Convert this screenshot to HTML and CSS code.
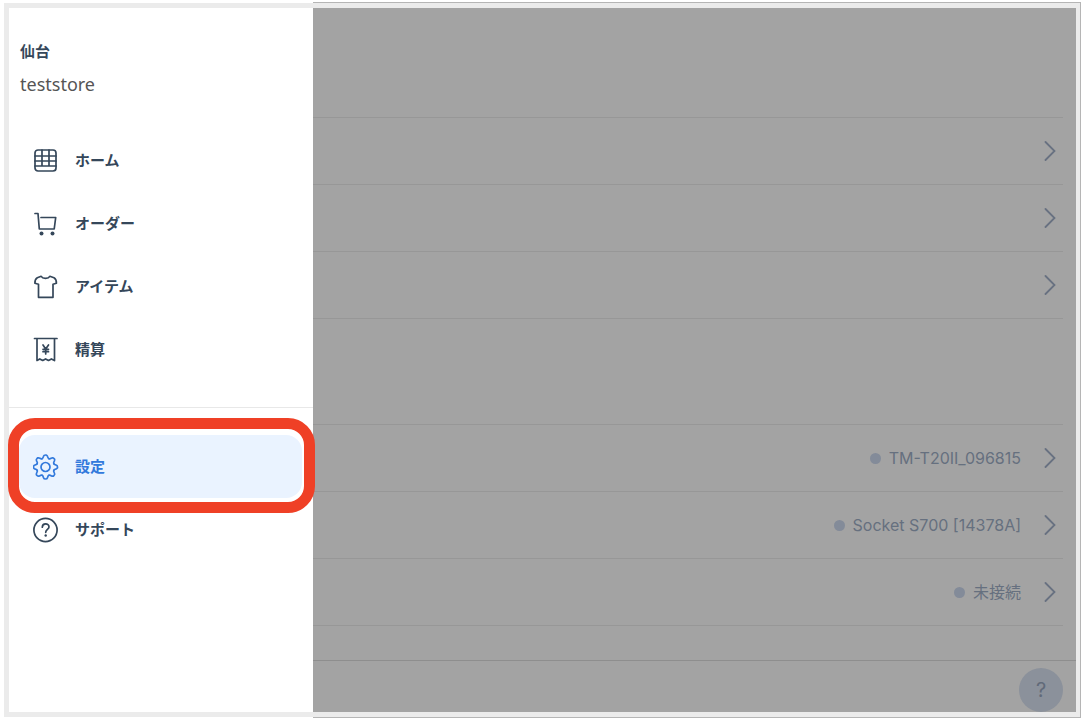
FILE: index.html
```html
<!DOCTYPE html>
<html lang="ja">
<head>
    <meta charset="UTF-8">
    <meta name="viewport" content="width=device-width, initial-scale=1.0">
    <title>設定</title>
    <link rel="stylesheet" href="styles.css">
</head>
<body>
    <div class="app">
        <aside class="sidebar">
            <div class="store">
                <h1 class="store-name">仙台</h1>
                <p class="store-id">teststore</p>
            </div>

            <nav class="menu">
                <a class="menu-item" href="#home">
                    <svg class="icon" viewBox="0 0 26 26">
                        <rect x="2" y="2" width="21" height="21" rx="3"/>
                        <path d="M2 8h21M2 13h21M2 18h21M9 2v16M16 2v16"/>
                    </svg>
                    ホーム
                </a>
                <a class="menu-item" href="#orders">
                    <svg class="icon" viewBox="0 0 26 26">
                        <path d="M2 2.500h3l1.300 15.500h14.900l1.500-11.500H8"/>
                        <circle class="dot-fill" cx="8.500" cy="22.500" r="2"/>
                        <circle class="dot-fill" cx="19.500" cy="22.500" r="2"/>
                    </svg>
                    オーダー
                </a>
                <a class="menu-item" href="#items">
                    <svg class="icon" viewBox="0 0 26 26">
                        <path d="M8.200 2.300c1.400 2.700 7.200 2.700 8.600 0l4.200 1.500c1.700 1 2.500 2.800 2.400 5.400l-3.400 1V23.300H5.500V10.200l-3.600-1c-.1-2.600.7-4.400 2.400-5.400z"/>
                    </svg>
                    アイテム
                </a>
                <a class="menu-item" href="#settlement">
                    <svg class="icon" viewBox="0 0 26 26">
                        <path d="M1.500 1.500h22.500M4 1.500v22l2.800-1.600L9.700 23.500l2.900-1.600 2.900 1.600 2.900-1.600L21.500 23.500V1.500"/>
                        <path d="M10 8l2.700 4L15.500 8M12.700 12V17M10 12.300h5.500M10 14.700h5.500"/>
                    </svg>
                    精算
                </a>
            </nav>

            <nav class="menu menu-sub">
                <a class="menu-item active" href="#settings">
                    <svg class="icon" viewBox="-12.500 -13 26 26">
                        <path id="tooth" d="M-3.400-8.300C-2.300-8.700-2.300-9.800-2-10.700Q-1.600-12 0-12T0-12Q1.600-12 2-10.700C2.300-9.800 2.300-8.700 3.400-8.300"/>
                        <use href="#tooth" transform="rotate(45)"/>
                        <use href="#tooth" transform="rotate(90)"/>
                        <use href="#tooth" transform="rotate(135)"/>
                        <use href="#tooth" transform="rotate(180)"/>
                        <use href="#tooth" transform="rotate(225)"/>
                        <use href="#tooth" transform="rotate(270)"/>
                        <use href="#tooth" transform="rotate(315)"/>
                        <circle r="4.500"/>
                    </svg>
                    設定
                </a>
                <a class="menu-item" href="#support">
                    <svg class="icon" viewBox="0 0 26 26">
                        <circle cx="12.500" cy="13" r="11.600"/>
                        <path d="M9.300 10.200c0-4.400 6.700-4.400 6.700-.3 0 2.500-3.300 2.500-3.300 5.400"/>
                        <circle class="dot-fill" cx="12.700" cy="18.500" r="1.200"/>
                    </svg>
                    サポート
                </a>
            </nav>
        </aside>

        <main class="main">
            <ul class="list">
                <li><a class="row" href="#general" aria-label="一般"><svg class="chevron" viewBox="0 0 12 20"><path d="M1.500 1l9 9-9 9"/></svg></a></li>
                <li><a class="row" href="#payment" aria-label="決済"><svg class="chevron" viewBox="0 0 12 20"><path d="M1.500 1l9 9-9 9"/></svg></a></li>
                <li><a class="row" href="#receipt" aria-label="レシート"><svg class="chevron" viewBox="0 0 12 20"><path d="M1.500 1l9 9-9 9"/></svg></a></li>
            </ul>
            <ul class="list">
                <li><a class="row" href="#printer"><span class="status">TM-T20II_096815</span><svg class="chevron" viewBox="0 0 12 20"><path d="M1.500 1l9 9-9 9"/></svg></a></li>
                <li><a class="row" href="#scanner"><span class="status">Socket S700 [14378A]</span><svg class="chevron" viewBox="0 0 12 20"><path d="M1.500 1l9 9-9 9"/></svg></a></li>
                <li><a class="row" href="#terminal"><span class="status">未接続</span><svg class="chevron" viewBox="0 0 12 20"><path d="M1.500 1l9 9-9 9"/></svg></a></li>
            </ul>
            <footer class="footer">
                <button class="help" type="button">?</button>
            </footer>
        </main>
    </div>
</body>
</html>
```
FILE: styles.css
```css
* {
    margin: 0;
    padding: 0;
    box-sizing: border-box;
}
body {
    display: flex;
    min-height: 100vh;
    padding: 3px 11px 11px 4px;
    background-color: #fff;
    font-family: Inter, "Noto Sans CJK JP", sans-serif;
    font-size: 15px;
    line-height: 20px;
    color: #35475a;
}
a {
    color: inherit;
    text-decoration: none;
}
.app {
    flex: 1;
    display: flex;
    border: 5px solid #ebebeb;
}

/* Sidebar */
.sidebar {
    flex: 0 0 304px;
    background-color: #fff;
}
.store {
    height: 121px;
    padding: 34px 11px 0;
}
.store-name {
    font-size: 15px;
    font-weight: 700;
}
.store-id {
    margin-top: 12px;
    font-family: "Noto Sans", sans-serif;
    font-size: 18px;
    color: #555;
}
.menu {
    padding: 0 11px 26px 10px;
}
.menu-sub {
    padding-top: 27px;
    border-top: 1px solid #e8e8e8;
}
.menu-item {
    display: flex;
    align-items: center;
    gap: 16px;
    height: 63px;
    padding-left: 14px;
    font-weight: 700;
}
.icon {
    width: 26px;
    height: 26px;
    fill: none;
    stroke: currentColor;
    stroke-width: 1.7;
    stroke-linejoin: round;
    stroke-linecap: round;
}
.dot-fill {
    fill: currentColor;
    stroke: none;
}
.menu-item.active {
    position: relative;
    z-index: 1;
    border-radius: 16px;
    background-color: #eaf3ff;
    color: #3279dc;
}
/* red ring around the current item */
.menu-item.active::after {
    content: "";
    position: absolute;
    top: -17px;
    right: -13px;
    bottom: -15px;
    left: -11px;
    border: 11px solid #ef4026;
    border-radius: 27px;
}

/* Dimmed content */
.main {
    position: relative;
    flex: 1;
    display: flex;
    flex-direction: column;
    padding-top: 109px;
    background-color: #a3a3a3;
    color: #66707f;
}
.main::after {
    content: "";
    position: absolute;
    top: -6px;
    right: -5px;
    bottom: -6px;
    left: 0;
    border: 1px solid #b5b5b5;
    border-left: 0;
    pointer-events: none;
}
.list {
    margin-right: 13px;
    margin-bottom: 105px;
    border-top: 1px solid #979797;
    list-style: none;
}
.list:nth-of-type(2) {
    margin-bottom: 34px;
}
.row {
    display: flex;
    justify-content: flex-end;
    align-items: center;
    gap: 23px;
    height: 67px;
    padding-right: 7px;
    border-bottom: 1px solid #979797;
}
.status {
    display: flex;
    align-items: center;
    gap: 8px;
    font-size: 16px;
}
.status::before {
    content: "";
    width: 11px;
    height: 11px;
    border-radius: 50%;
    background-color: #838b99;
}
.chevron {
    width: 12px;
    height: 20px;
    fill: none;
    stroke: #687181;
    stroke-width: 1.8;
    stroke-linecap: round;
}
.footer {
    display: flex;
    justify-content: flex-end;
    margin-top: auto;
    padding: 7px 13px 0;
    border-top: 1px solid #8e8e8e;
}
.help {
    width: 44px;
    height: 44px;
    border: none;
    border-radius: 50%;
    background-color: #8b919b;
    color: #616a79;
    font-family: inherit;
    font-size: 20px;
    cursor: pointer;
}
```
